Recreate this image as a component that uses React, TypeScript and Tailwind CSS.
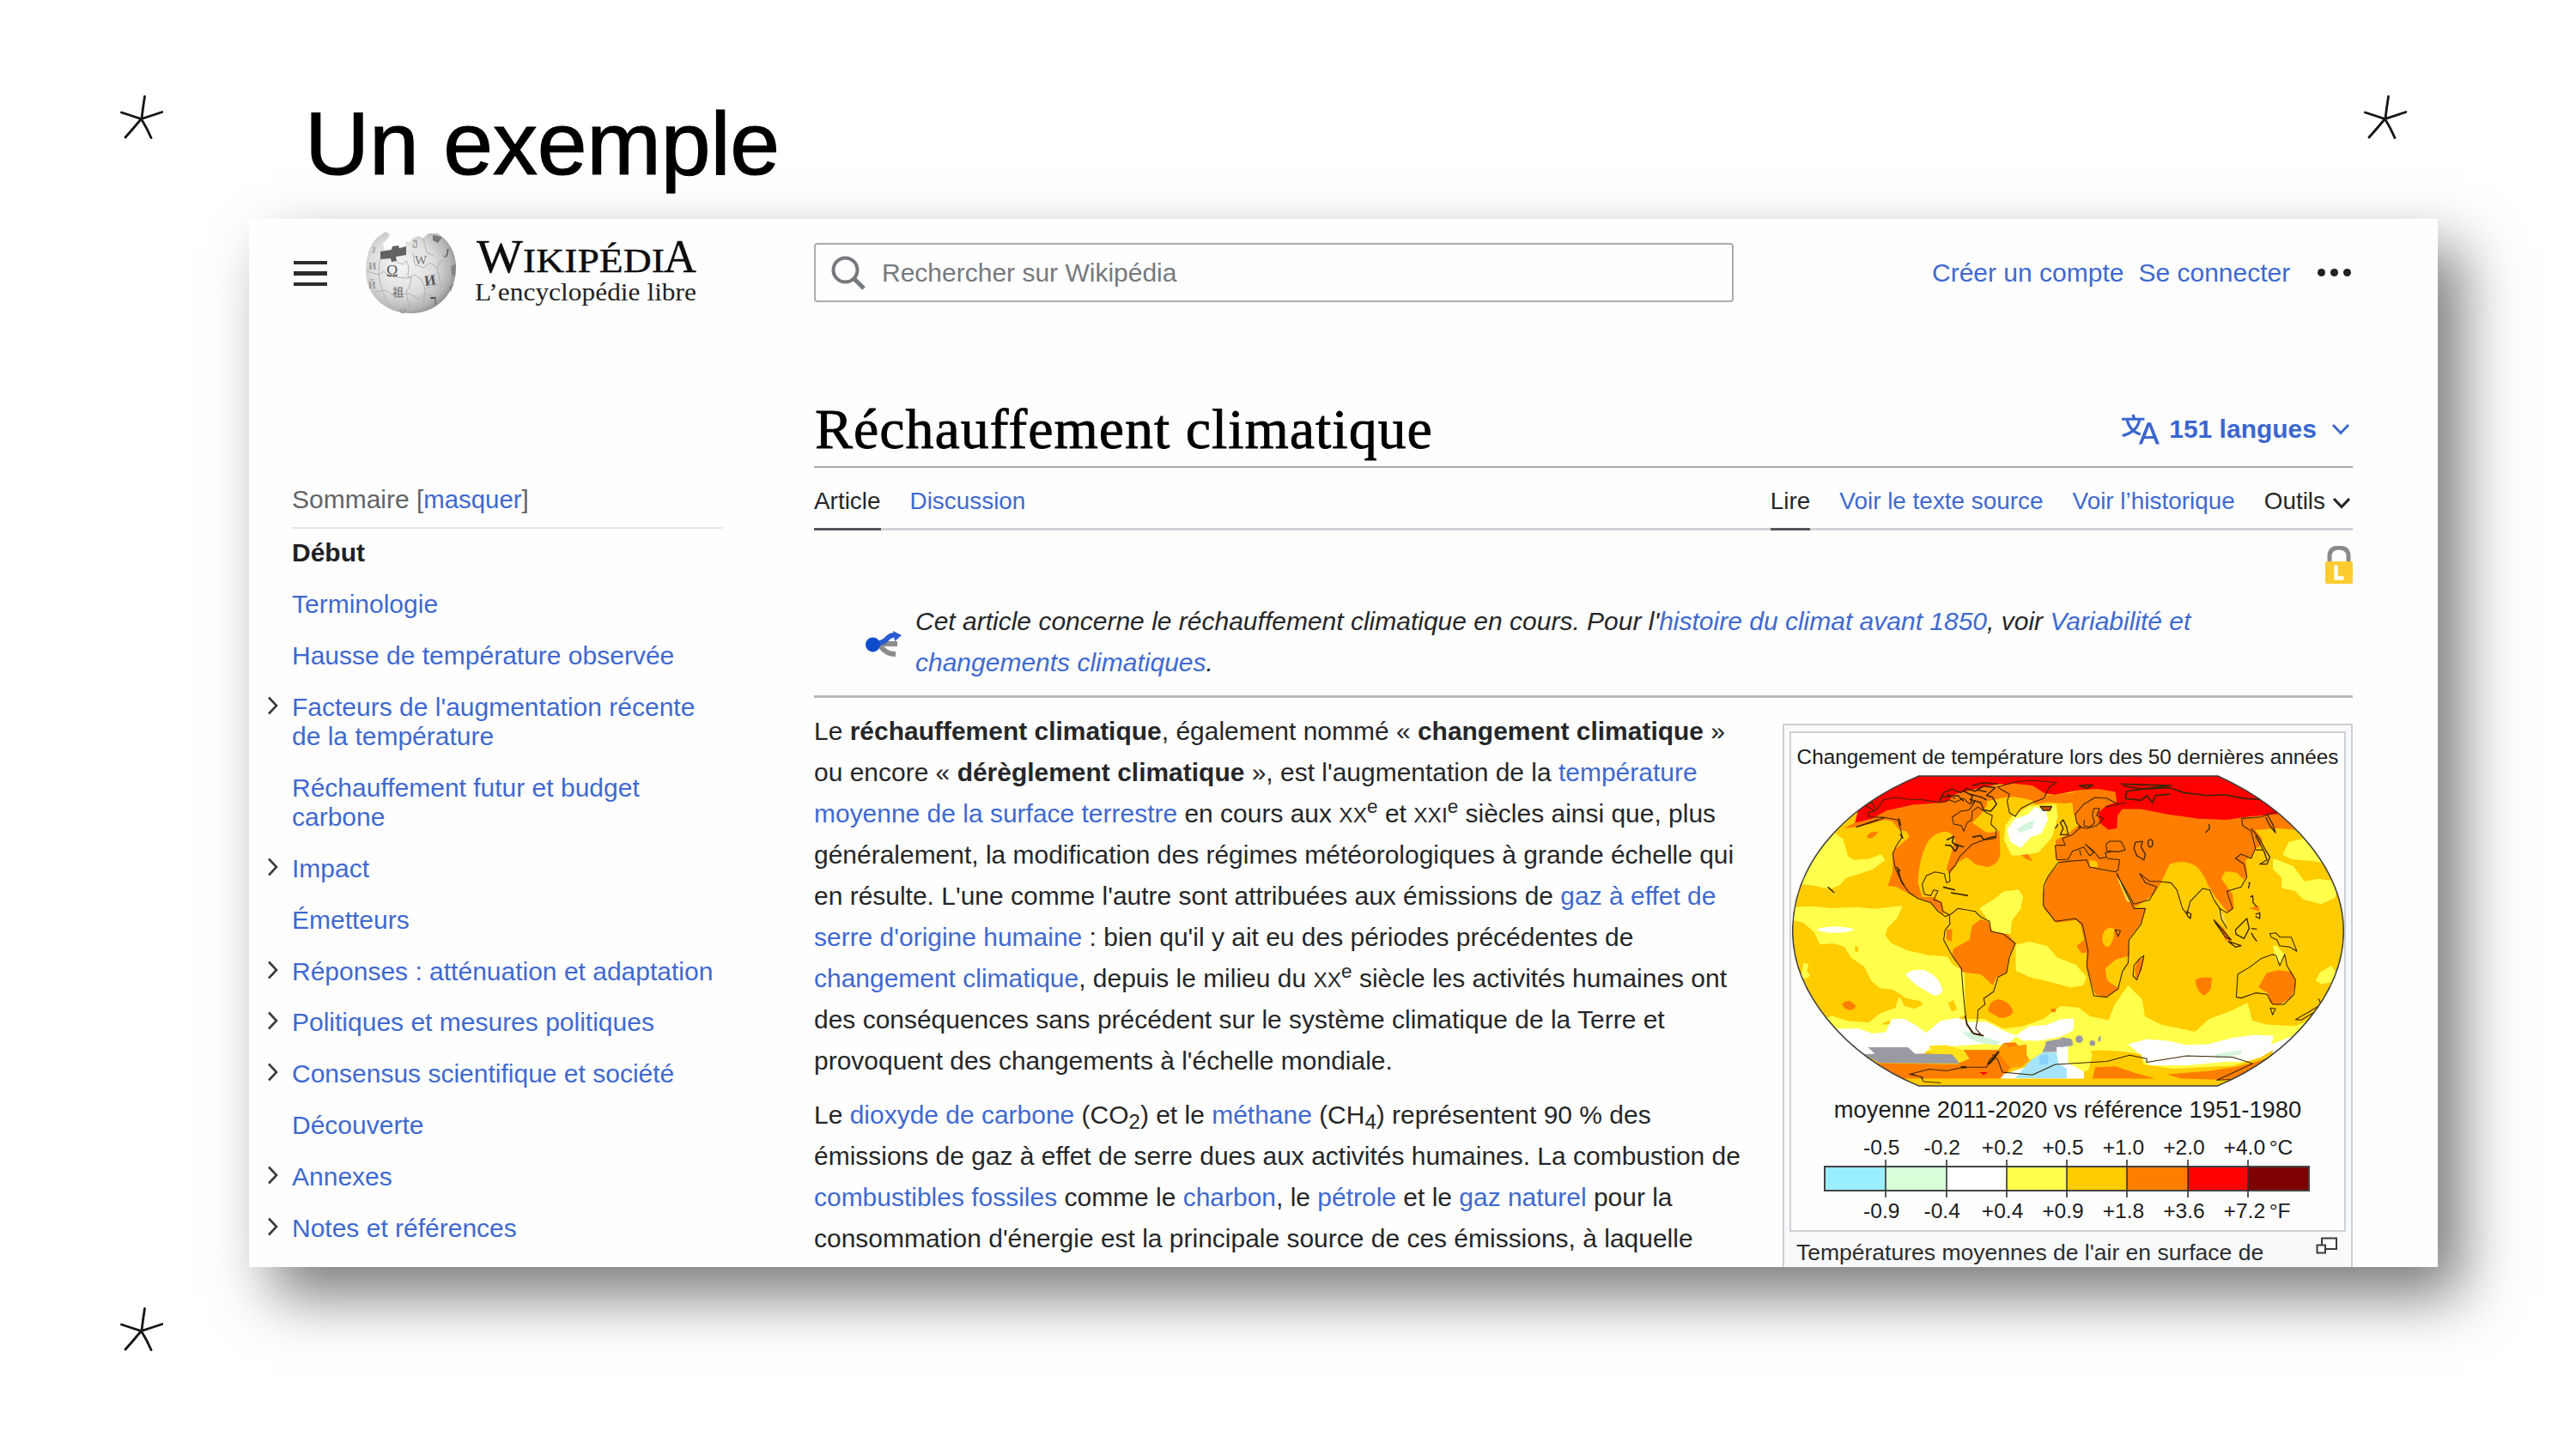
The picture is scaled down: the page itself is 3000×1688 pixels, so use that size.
import React from "react";

const SANS = "font-['Liberation_Sans',Arial,sans-serif]";

function A({ children }: { children: React.ReactNode }) {
  return <a className="text-[#3f69cf]">{children}</a>;
}

function Star({ className }: { className: string }) {
  return (
    <svg viewBox="0 0 50 52" className={"absolute h-[52px] w-[50px] " + className} fill="none" stroke="#151515" strokeWidth="2.8" strokeLinecap="round">
      <path d="M28.5 1.5 Q26.5 14 25 27 M1.5 20 L24.5 27.5 L49 19.5 M24.5 27.5 Q15 39 6 49 M24.5 27.5 Q31 38 36 49.5" />
    </svg>
  );
}

function Globe() {
  return (
    <svg viewBox="0 0 107 96" className="ml-[44px] h-[96px] w-[107px] shrink-0">
      <defs>
        <radialGradient id="ball" cx="0.4" cy="0.42" r="0.64">
          <stop offset="0" stopColor="#f4f4f4" />
          <stop offset="0.55" stopColor="#dedede" />
          <stop offset="0.85" stopColor="#b4b4b4" />
          <stop offset="1" stopColor="#878787" />
        </radialGradient>
      </defs>
      <path d="M14 7 L24 0 L29 3 L26 9 L21 14 L23 21 L33 19 L40 20 L48 17 L47 11 L53 12 L56 7 L62 5 L68 7 L74 2 L84 2 C99 10 107 27 106 44 C105 74 82 95 54 95 C24 95 1 75 1 45 C1 29 6 15 14 7Z" fill="url(#ball)" />
      <path d="M18 23 L31 21 L32 17 L39 16 L40 19 L48 17 L48 27 L36 29 L37 34 L31 35 L30 31 L18 32Z" fill="#616161" />
      <g fill="none" stroke="#b2b2b2" strokeWidth="1">
        <path d="M18 31 Q14 46 18 60 Q22 78 32 90 M36 35 L44 38 L48 34 L51 40 L50 52 L54 54 L52 64 L48 70 L52 92 M56 24 L58 38 L68 42 L76 36 L84 42 L88 34 L102 34 M2 46 L16 50 L22 46 L28 52 L50 54 L58 50 L66 56 L70 66 L84 62 L104 62 M12 70 L24 68 L32 74 L52 72 L62 78 L72 72 L86 78 M68 8 L72 24 L80 28 M70 66 L68 86 M84 42 L88 60" />
      </g>
      <g fill="#555" className="font-['Liberation_Serif',serif]">
        <text x="25" y="52" fontSize="18">Ω</text>
        <text x="58" y="38" fontSize="15" fill="#777">W</text>
        <text x="69" y="62" fontSize="17" fontWeight="700" transform="rotate(-8 76 56)">И</text>
        <text x="32" y="75" fontSize="13" fontWeight="700" className="font-['Noto_Sans_CJK_JP',sans-serif]" fill="#888">祖</text>
        <text x="76" y="85" fontSize="16" fontWeight="700">ר</text>
        <text x="92" y="30" fontSize="15" transform="rotate(12 95 25)">J</text>
        <text x="4" y="44" fontSize="12" fontWeight="700" fill="#999">И</text>
        <text x="4" y="66" fontSize="12" fill="#888">Й</text>
        <text x="40" y="93" fontSize="11" fill="#888">ن</text>
        <text x="8" y="25" fontSize="11" fill="#888">J</text>
        <text x="55" y="16" fontSize="12" fill="#888">უ</text>
      </g>
      <path d="M79 4 L90 6 L85 13 L79 10Z" fill="#777" />
      <path d="M100 40 L106 38 L105 52 L101 50Z M98 64 L103 60 L100 70Z" fill="#858585" />
    </svg>
  );
}

function Wordmark() {
  return (
    <svg viewBox="0 0 262 96" className="ml-[20px] h-[96px] w-[262px] shrink-0 font-['Liberation_Serif',serif]" fill="#0d0d0d">
      <text x="3" y="47" fontSize="55" textLength="54" lengthAdjust="spacingAndGlyphs" stroke="#0d0d0d" strokeWidth="0.4">W</text>
      <text x="57" y="47" fontSize="41" textLength="165" lengthAdjust="spacingAndGlyphs" stroke="#0d0d0d" strokeWidth="0.4">IKIPÉDI</text>
      <text x="221" y="47" fontSize="55" textLength="38" lengthAdjust="spacingAndGlyphs" stroke="#0d0d0d" strokeWidth="0.4">A</text>
      <text x="1" y="80" fontSize="29.5" textLength="258" lengthAdjust="spacingAndGlyphs" fill="#222">L’encyclopédie libre</text>
    </svg>
  );
}

function Chevron({ className }: { className: string }) {
  return (
    <svg viewBox="0 0 22 14" className={"h-[14px] w-[22px] " + className} fill="none" stroke="currentColor">
      <path d="M2 2 L11 11.5 L20 2" />
    </svg>
  );
}

function Header() {
  return (
    <header className="flex h-[69px] items-center text-[30px] leading-[30px]">
      <div className="mt-[2px] ml-[52px] flex w-[39px] shrink-0 flex-col gap-[8px]">
        <span className="h-[4.5px] bg-[#2b2c2e]" />
        <span className="h-[4.5px] bg-[#2b2c2e]" />
        <span className="h-[4.5px] bg-[#2b2c2e]" />
      </div>
      <Globe />
      <Wordmark />
      <div className="ml-[134px] flex h-[69px] w-[1071px] shrink-0 items-center rounded-[4px] border-2 border-[#a9abae] text-[#75797e]">
        <svg viewBox="0 0 40 40" className="ml-[18px] h-[40px] w-[40px]" fill="none" stroke="#75797e" strokeWidth="4">
          <circle cx="16.5" cy="16.5" r="14" />
          <path d="M26.5 26.5 L38 38" strokeWidth="5" />
        </svg>
        <span className="ml-[19px]">Rechercher sur Wikipédia</span>
      </div>
      <nav className="ml-[231px] flex whitespace-nowrap">
        <A>Créer un compte</A>
        <span className="ml-[17px]"><A>Se connecter</A></span>
      </nav>
      <span className="ml-[32px] flex gap-[6px]">
        <i className="h-[9px] w-[9px] rounded-full bg-[#202122]" />
        <i className="h-[9px] w-[9px] rounded-full bg-[#202122]" />
        <i className="h-[9px] w-[9px] rounded-full bg-[#202122]" />
      </span>
    </header>
  );
}

const TOC: { lines: string[]; open?: boolean }[] = [
  { lines: ["Terminologie"] },
  { lines: ["Hausse de température observée"] },
  { lines: ["Facteurs de l'augmentation récente", "de la température"], open: true },
  { lines: ["Réchauffement futur et budget", "carbone"] },
  { lines: ["Impact"], open: true },
  { lines: ["Émetteurs"] },
  { lines: ["Réponses : atténuation et adaptation"], open: true },
  { lines: ["Politiques et mesures politiques"], open: true },
  { lines: ["Consensus scientifique et société"], open: true },
  { lines: ["Découverte"] },
  { lines: ["Annexes"], open: true },
  { lines: ["Notes et références"], open: true },
];

function Sidebar() {
  return (
    <aside className="w-[658px] shrink-0 whitespace-nowrap pl-[21px] pt-[213px] text-[30px] leading-[34.3px]">
      <div className="ml-[29px] w-[502px] border-b-2 border-[#e6e8ec] pb-[15px] text-[#616468]">
        Sommaire <span className="text-[29.4px]">[<A>masquer</A>]</span>
      </div>
      <div className="ml-[29px] mt-[11px] font-bold text-[#202122]">Début</div>
      <ul className="mt-[25.6px] flex flex-col gap-[25.5px]">
        {TOC.map((t) => (
          <li key={t.lines[0]} className="flex">
            <span className="w-[29px] shrink-0">
              {t.open && (
                <svg viewBox="0 0 12 22" className="mt-[4px] h-[22px] w-[13px]" fill="none" stroke="#3a3b3d" strokeWidth="2.6">
                  <path d="M1.5 1.5 L10.5 11 L1.5 20.5" />
                </svg>
              )}
            </span>
            <span>
              {t.lines.map((l) => (
                <div key={l}><A>{l}</A></div>
              ))}
            </span>
          </li>
        ))}
      </ul>
    </aside>
  );
}

const GLOBE_EDGE =
  "M462 27 H1510 C1770 145 1948 360 1948 570 C1948 780 1770 1000 1508 1110 H462 C200 1000 22 780 22 570 C22 350 180 145 462 27Z";

function WorldMap() {
  return (
    <svg viewBox="20 24 1930 1089" className="mt-[7px] h-[363px] w-[643px]">
      <defs>
        <clipPath id="edge"><path d={GLOBE_EDGE} /></clipPath>
      </defs>
      <g clipPath="url(#edge)">
        <rect x="0" y="0" width="1980" height="1140" fill="#ffcc00" />

        {/* mild warming */}
        <g fill="#ffff4c" stroke="#ffff4c" strokeWidth="8" strokeLinejoin="round">
          <path d="M40 400 L130 260 L165 228 L195 250 L212 310 L235 325 L290 320 L330 305 L340 320 L300 350 L245 368 L205 380 L185 405 L150 418 L90 405Z" />
          <path d="M20 490 L90 486 L150 492 L250 490 L310 495 L400 485 L385 520 L350 555 L342 585 L365 615 L420 640 L500 658 L560 662 L580 690 L618 710 L622 860 L570 880 L500 925 L480 915 L410 880 L350 880 L290 915 L200 905 L130 880 L160 870 L220 888 L290 893 L330 860 L385 840 L395 805 L410 835 L450 845 L485 825 L470 810 L420 800 L375 770 L330 765 L300 740 L275 690 L230 660 L205 620 L165 608 L120 612 L100 570 L60 535 L25 528Z" />
          <path d="M60 680 L78 685 L72 710 L84 725 L70 735 L52 730Z" strokeWidth="0" />
          <path d="M680 490 L730 460 L760 435 L810 428 L824 450 L815 490 L785 530 L780 575 L750 582 L715 555 L700 515Z" />
          <path d="M806 620 L850 610 L910 625 L945 665 L1010 690 L1045 730 L1035 755 L995 762 L930 745 L850 725 L806 705Z" />
          <path d="M770 200 L800 160 L850 135 L940 130 L945 170 L925 240 L880 290 L830 300 L790 300 L765 250Z" />
          <path d="M0 880 L150 900 L350 900 L560 880 L690 880 L760 915 L830 905 L900 880 L960 835 L1020 840 L1060 870 L1130 885 L1150 830 L1195 765 L1240 810 L1250 870 L1310 900 L1430 925 L1480 880 L1560 850 L1610 825 L1625 885 L1680 900 L1780 905 L1860 870 L1980 850 L1900 1000 L1700 1030 L1300 1050 L900 1060 L860 1000 L500 985 L0 960Z" />
          <path d="M1740 300 L1760 260 L1830 245 L1900 290 L1900 330 L1840 320 L1770 315Z" />
          <path d="M1705 320 L1770 345 L1810 400 L1860 390 L1930 400 L1915 450 L1870 470 L1810 455 L1780 425 L1735 415 L1735 380 L1705 350Z" />
          <path d="M1855 740 L1870 715 L1905 695 L1930 740 L1870 750Z" />
          <path d="M1700 620 L1715 620 L1740 650 L1732 685 L1712 670Z M515 395 L545 385 L545 415 L520 420Z" strokeWidth="0" />
        </g>

        {/* strong warming over land */}
        <g fill="#ff7e00">
          <path d="M200 210 L300 160 L430 130 L560 110 L590 60 L800 60 L905 95 L1000 85 L1040 65 L1160 80 L1170 130 L1300 130 L1500 170 L1660 150 L1740 150 L1785 215 L1720 210 L1640 215 L1665 250 L1640 300 L1605 320 L1612 370 L1600 390 L1575 365 L1535 360 L1520 385 L1545 420 L1560 440 L1565 490 L1545 505 L1500 450 L1475 410 Q1450 350 1425 338 Q1385 318 1340 335 L1310 400 L1285 440 L1215 490 L1258 490 L1240 540 L1195 600 L1200 655 L1150 670 L1115 700 L1125 745 L1165 770 L1120 800 L1080 790 L1050 700 L1050 640 L1030 550 L1015 530 L945 540 L900 490 L895 440 L915 380 L955 330 L940 310 L942 250 L975 235 L1020 200 L1005 160 L1000 125 L920 118 L870 125 L860 112 L770 100 L700 115 L720 200 L745 220 L748 300 Q740 340 700 345 L660 335 L630 310 L600 330 L570 372 L560 350 L590 250 Q575 215 545 222 Q505 235 490 265 Q462 325 460 400 L475 450 L515 450 L545 470 L550 515 L505 470 L440 445 L385 415 L355 410 L372 360 L372 290 L430 240 L420 220 L395 215 L370 185 L345 180 L290 195 L240 205Z" />
          <path d="M650 550 L680 528 L705 535 L720 570 L775 580 L800 612 L780 655 L770 715 L735 730 L722 758 L680 720 L615 712 L580 650 L585 630 L640 600Z" />
          <path d="M560 565 L580 562 L578 605 L560 598Z" />
          <path d="M282 240 Q290 218 320 222 Q312 240 290 246Z M195 825 Q205 810 225 815 L243 830 Q240 846 220 845 Q200 840 195 825Z M705 850 Q710 808 745 808 Q790 820 792 855 Q775 875 745 872Z M820 303 L845 300 L862 325 L840 318Z M735 165 L748 165 L740 195 L730 190Z" />
          <path d="M1430 740 Q1450 725 1488 733 L1484 770 Q1465 798 1455 792 Q1430 770 1430 740Z" />
          <path d="M1650 765 L1680 715 L1720 706 L1768 712 L1782 755 L1765 800 L1720 830 L1690 820 L1683 785Z" />
          <path d="M1230 670 L1252 660 L1240 710 L1222 740 L1218 700Z M1502 535 L1530 560 L1555 605 L1535 600Z M1618 490 L1650 480 L1655 500Z" />
          <path d="M1015 620 L1040 600 L1055 645 L1030 645Z M925 840 L943 840 L940 853 L927 852Z" />
        </g>

        {/* islands of milder values */}
        <g fill="#ffcc00">
          <path d="M1105 585 Q1115 550 1145 560 Q1150 600 1125 625 Q1100 620 1105 585Z M1195 658 L1160 665 L1115 700 L1120 735 L1140 752 L1165 730 L1195 690Z" />
          <path d="M650 190 L680 160 L700 130 L745 105 L800 100 L770 150 L740 220 L700 225Z" />
          <path d="M950 125 L1000 120 L1002 190 L960 190Z" />
          <path d="M1110 85 L1060 115 L1010 150 L1003 130 L1080 75Z" fill="#ff7e00" />
          <path d="M1630 300 L1645 275 L1672 285 L1668 330 L1640 335Z M1060 320 L1085 325 L1090 345 L1060 345Z" />
          <path d="M565 820 L585 810 L597 845 L578 850Z M240 620 L252 625 L250 645 L240 640Z" />
          <path d="M520 370 L545 368 L560 400 L530 430 L480 440 L475 395Z" />
        </g>
        <path d="M1510 490 L1528 510 L1540 545 L1525 540 L1512 515Z M1155 380 L1180 410 L1208 470 L1190 465Z" fill="#f5d84a" />

        {/* arctic */}
        <path d="M240 190 L255 130 L420 27 L1560 27 L1750 130 L1715 160 L1620 168 L1540 180 L1440 176 L1330 160 L1240 142 L1175 142 L1158 165 L1155 210 L1125 214 L1095 190 L1090 155 L1120 130 L1155 118 L1150 82 L1090 72 L1030 75 L940 92 L870 85 L820 60 L740 55 L660 72 L590 90 L560 118 L440 128 L350 148 L300 175Z" fill="#ff0000" />
        <path d="M735 70 L790 52 L860 60 L915 95 L880 115 L840 110 L810 120 L785 95Z" fill="#ff7e00" />
        <path d="M785 98 L830 105 L860 112 L850 130 L800 165 L775 140Z" fill="#ffcc00" />

        {/* cold spots */}
        <g fill="#fffffe" stroke="#fffffe" strokeWidth="6" strokeLinejoin="round">
          <path d="M775 215 L800 180 L845 165 L870 138 L905 150 L912 180 L890 225 L850 240 L820 275 L785 255Z" />
          <path d="M105 564 Q130 553 180 553 Q225 557 237 564 Q220 575 160 575 Q120 573 105 564Z" strokeWidth="0" />
          <path d="M420 722 Q435 705 480 708 Q530 725 543 775 Q535 795 515 790 Q480 770 455 755Z" />
          <path d="M130 915 L250 912 L300 930 L350 925 L370 880 L410 878 L450 900 L490 928 L540 885 L600 875 L640 890 L700 890 L770 925 L800 935 L770 965 L700 960 L560 970 L500 975 L480 995 L250 1005Z" />
          <path d="M805 935 L850 905 L910 900 L960 880 L1002 878 L1000 915 L960 935 L880 950 L830 950Z" />
          <path d="M1200 965 L1260 950 L1330 955 L1400 970 L1470 968 L1560 945 L1640 935 L1700 938 L1690 970 L1780 935 L1840 930 L1740 1010 L1640 1025 L1550 1022 L1400 1035 L1270 1035 L1240 1000Z" />
        </g>
        <path d="M805 215 L840 190 L868 180 L860 210 L820 225Z M612 920 L650 925 L690 940 L750 955 L735 968 L680 960 L640 945Z M1500 1000 L1590 985 L1590 1000 L1500 1015Z" fill="#d4f5dc" />

        {/* antarctica */}
        <path d="M290 1030 L600 1035 L640 1000 L620 985 L740 985 L760 960 L800 958 L838 1000 L830 1030 L780 1050 L760 1090 L420 1095Z" fill="#ff7e00" />
        <path d="M740 990 L760 960 L780 975 L840 965 L860 1010 L820 1045 L780 1045Z" fill="#ff9d00" />
        <path d="M620 985 L740 985 L740 1045 L620 1040Z" fill="#ff7e00" />
        <path d="M500 970 L560 968 L620 985 L640 1015 L605 1030 L580 1000 L510 998Z" fill="#ffe11a" />
        <path d="M840 950 L900 960 L900 1000 L850 1020 L840 1000Z" fill="#ffff4c" />
        <path d="M415 1085 H1508 L1560 1115 H420Z" fill="#ffcc00" />
        <path d="M945 970 L985 970 L985 1030 L1040 1060 L1040 1085 L748 1085 L760 1070 L850 1040 L900 1020Z" fill="#fffffe" />
        <path d="M850 1025 L900 990 L945 995 L950 1030 L980 1050 L980 1083 L800 1083 L820 1060Z" fill="#a5e4fa" />
        <path d="M885 1005 L915 1000 L915 1035 L885 1035Z" fill="#86d2fb" />
        <path d="M1045 990 L1100 985 L1180 990 L1240 1000 L1250 1035 L1350 1050 L1560 1040 L1660 1010 L1700 985 L1700 1010 L1600 1060 L1500 1085 L1045 1085Z" fill="#ffcc00" />
        <path d="M1045 960 L1070 1000 L1055 1060 L1038 1050 L985 1025 L985 985Z" fill="#ffff4c" />
        <path d="M1080 1045 L1150 1042 L1220 1065 L1290 1085 L1070 1085Z M1330 1070 L1480 1058 L1580 1042 L1630 1030 L1720 1000 L1690 1050 L1560 1090 L1380 1085Z" fill="#ff7e00" />
        <path d="M675 1062 L705 1062 L690 1072Z" fill="#ff0000" />
        <g fill="#9a9aa3">
          <path d="M285 975 L425 975 L450 998 L580 1000 L606 1032 L325 1030 L270 1000 L310 998Z" />
          <path d="M908 955 L960 945 L1000 950 L1000 970 L945 975 L945 992 L895 992 L905 970Z" />
          <path d="M960 940 L995 945 L1003 968 L960 975Z" />
          <circle cx="1024" cy="947" r="13" />
          <circle cx="1070" cy="961" r="10" />
          <path d="M1092 940 L1100 935 L1098 955 L1090 955Z" />
        </g>
        <path d="M892 134 L925 134 L920 145 L900 147Z" fill="#d84a00" />

        {/* coastlines */}
        <g fill="none" stroke="#3b2400" strokeWidth="3.2" strokeLinejoin="round">
          <path d="M245 205 L300 188 L345 172 L290 170 L285 155 L310 148 L265 125 L300 120 L315 145 L340 110 L380 102 L430 108 L480 110 L540 120 L570 110 L590 118 L620 105 L640 125 L660 115 L640 145 L610 150 L580 170 L585 195 L612 200 L620 220 L632 190 L648 180 L650 150 L670 135 L700 155 L720 165 L715 195 L735 215 L730 245 L690 250 L650 265 L625 290 L605 310 L590 340 L570 360 L572 395 L560 400 L552 368 L520 362 L490 375 L475 405 L482 440 L505 445 L515 425 L530 428 L515 460 L540 468 L548 500 L570 512" />
          <path d="M345 172 L390 180 L400 215 L405 240 L385 270 L372 300 L380 345 L395 380 L415 415 L430 435 L460 455 L505 470 L530 500 L555 518 L575 510 L600 490 L660 500 L680 520 L710 535 L715 570 L760 580 L800 612 L780 660 L770 715 L740 730 L725 780 L690 805 L695 825 L670 845 L668 880 L662 910 L680 930 L650 925 L630 895 L625 850 L618 780 L612 700 L580 655 L550 600 L555 565 L572 545 L570 512" />
          <path d="M390 355 L402 395 L412 410 M385 345 L398 360" strokeWidth="5" />
          <path d="M625 865 L632 895 L655 928 L690 935" strokeWidth="5" />
          <path d="M740 65 L800 48 L860 42 L945 50 L920 65 L900 105 L860 120 L820 140 L800 168 L780 155 L772 115 L780 90 L745 70Z" />
          <path d="M560 250 L585 238 L580 258 L600 275 L590 290 L575 270 L555 268 M590 265 L620 275 M650 240 L680 235 L690 250 L720 240 L735 240 M548 415 L590 425 M575 435 L635 445" strokeWidth="5" />
          <path d="M535 115 L550 85 L580 72 L610 85 L630 70 L660 80 L690 62 L730 68 L700 95 L720 100 L735 125 L715 150 L690 145 L680 120 L640 108 M545 100 L600 95 L620 115 M560 90 L590 105 M650 60 L690 50 L740 55 M640 90 L680 100 L700 110 M620 80 L650 95 L645 120 M665 75 L700 82" strokeWidth="4.5" />
          <path d="M888 133 L928 133 L920 147 L898 147Z M145 415 L168 435 M245 205 L320 180 M393 175 L400 200 M398 230 L408 245" strokeWidth="4.5" />
          <path d="M940 210 L950 195 M958 232 L985 232 L980 205 L968 180 L958 190 L968 210 Z" strokeWidth="4" />
          <path d="M945 320 L940 270 L975 268 L965 245 L1000 232 L1030 205 L1015 190 L1010 160 L1040 125 L1080 102 L1120 105 L1160 125 L1190 120 M1020 205 L1050 210 L1085 200 L1110 175 L1085 165 L1095 140 L1075 140 L1070 165 L1078 190 L1060 205 L1040 200 L1042 180 M1115 135 L1165 125" />
          <path d="M945 320 L985 318 L1000 290 L1040 275 L1060 305 L1075 295 L1045 265 L1075 290 L1095 315 L1120 310 L1115 295 L1140 290 M1025 285 L1030 305 M1130 255 L1170 255 L1185 285 L1160 292 L1120 288 L1118 265Z M1120 315 L1165 320 L1160 355 L1150 362 L1085 350 L1060 345 L1050 320 L985 325 L950 330 L915 378 L900 410 L898 480 L940 535 L975 530 L1010 525 L1035 545 L1045 590 L1055 640 L1050 690 L1075 795 L1120 800 L1160 770 L1175 710 L1195 680 L1198 600 L1240 545 L1255 490 L1215 490 L1185 430 L1155 365 M1155 370 L1215 475 L1270 460 L1295 415 L1255 400 L1235 368 L1270 395 L1300 395 L1345 400 L1365 425 L1385 490 L1400 510 L1412 465 L1455 420 L1480 425 L1495 460 L1515 490 L1540 505 L1560 490 L1540 430 L1590 415 L1610 380 L1600 335 L1570 315 L1590 300 L1625 315 L1640 280 L1625 220 L1595 200 L1592 175 L1660 170 L1700 155 L1765 152 M1515 490 L1520 525 L1540 560" />
          <path d="M1220 258 L1245 255 L1240 275 L1255 300 L1250 320 L1225 305 L1215 280Z M1265 262 A8 10 0 1 0 1280 262 A8 10 0 1 0 1265 262 M1477 195 L1480 210 L1465 225" strokeWidth="4" />
          <path d="M1400 500 L1415 510 L1412 525 L1402 515Z M1495 530 L1555 600 L1535 590 L1500 540Z M1545 605 L1590 620 L1570 625Z M1570 565 L1610 525 L1618 560 L1600 595 L1572 580Z M1625 560 L1645 562 M1625 575 L1640 600 M1630 585 L1645 605 M1622 450 L1630 445 L1632 470 L1645 485 M1640 510 L1655 505 L1655 525 L1640 518 M1615 400 L1620 400 L1615 420" strokeWidth="4" />
          <path d="M1690 578 L1710 575 L1725 590 L1765 590 L1785 640 L1760 625 L1725 620 L1715 600 L1695 590Z" />
          <path d="M1573 800 L1578 720 L1620 695 L1660 665 L1700 650 L1712 655 L1725 690 L1742 650 L1750 690 L1780 740 L1775 790 L1740 825 L1700 825 L1680 790 L1640 785 L1590 803Z M1692 838 L1710 840 L1700 862Z M1780 878 L1830 850 L1870 825 L1860 805 M1780 878 L1800 880 L1850 850 L1880 820" />
          <path d="M1250 655 L1240 700 L1225 740 L1212 725 L1215 690 L1235 665Z M1150 565 L1168 568 L1160 588Z" />
          <path d="M1625 210 L1650 240 L1675 285 L1690 310 L1680 335 L1655 335 L1680 320 L1670 290 L1640 235 M1640 285 L1665 285 M1675 170 L1690 200 L1710 225 L1700 195 L1680 160" strokeWidth="4" />
          <path d="M1025 60 L1070 58 L1050 70Z M1170 55 L1345 60 L1240 72 L1180 62 M1340 68 L1250 72 L1190 80 L1185 105 L1240 112 L1260 95 L1280 120 L1290 95 L1340 90 M1340 68 L1390 85 L1470 95 L1530 92 L1600 105 L1670 110" strokeWidth="5" />
          <path d="M430 1070 L500 1052 L560 1058 L620 1045 L700 1045 L710 1020 L745 990 M720 1000 L740 1020 L755 1062 L860 1072 L940 1035 L1120 1025 L1200 1003 L1260 1015 L1260 1028 L1400 1005 L1560 1010 L1630 1032 L1550 1070 L1505 1090 L1560 1088 L1640 1050 M430 1070 L470 1078 L480 1095 L540 1100 M440 1070 L480 1082" />
          <path d="M610 1045 L630 1045 M712 1030 L742 990 M705 1035 L730 1010" strokeWidth="8" />
        </g>
      </g>
      <path d={GLOBE_EDGE} fill="none" stroke="#3c3c3c" strokeWidth="4.5" />
    </svg>
  );
}

const SCALE = ["bg-[#99eeff]", "bg-[#d9ffd9]", "bg-white", "bg-[#ffff4c]", "bg-[#ffcc00]", "bg-[#ff7e00]", "bg-[#ff0000]", "bg-[#7e0000]"];

function Labels({ values, unit, className }: { values: string[]; unit: string; className: string }) {
  return (
    <div className={"flex pl-[70px] text-[24.6px] leading-[28px] text-[#1c1c1c] " + className}>
      {values.map((v, i) => (
        <span key={v} className="relative w-[70.45px] text-center">
          {v}
          {i === values.length - 1 && <span className="absolute left-[64px]">{unit}</span>}
        </span>
      ))}
    </div>
  );
}

function Thumb() {
  return (
    <figure className="mt-[15px] ml-[1128px] flex h-[700px] w-[664px] flex-col items-center whitespace-nowrap border-2 border-[#cdd0d5] bg-[#f8f9fa] pt-[7px]">
      <div className="flex h-[583px] w-[648px] shrink-0 flex-col items-center border-2 border-[#cdd0d5] bg-[#fefefe] text-[#1c1c1c]">
        <div className="mt-[14px] text-[24.3px] leading-[28px]">Changement de température lors des 50 dernières années</div>
        <WorldMap />
        <div className="mt-[11px] text-[27.3px] leading-[32px]">moyenne 2011-2020 vs référence 1951-1980</div>
        <div className="mt-[14px] w-[644px]">
          <Labels values={["-0.5", "-0.2", "+0.2", "+0.5", "+1.0", "+2.0", "+4.0"]} unit="°C" className="" />
          <div className="relative mt-[7px] ml-[38px] flex h-[30px] w-[566px] border-2 border-[#444]">
            {SCALE.map((c, i) => (
              <div key={c} className={"relative flex-1 " + c}>
                {i > 0 && <span className="absolute -top-[9px] -left-px h-[44px] w-[2px] bg-[#333]/80" />}
              </div>
            ))}
          </div>
          <Labels values={["-0.9", "-0.4", "+0.4", "+0.9", "+1.8", "+3.6", "+7.2"]} unit="°F" className="mt-[9px]" />
        </div>
      </div>
      <figcaption className="mt-[6px] flex w-full pl-[14px] text-[26.5px] leading-[36px] text-[#2b2c2e]">
        Températures moyennes de l'air en surface de
        <svg viewBox="0 0 26 20" className="absolute ml-[605px] h-[20px] w-[26px]" fill="#fefefe" stroke="#3a3b3d" strokeWidth="2">
          <path d="M7 1.5 H24 V14 H7Z" />
          <path d="M1.5 9.5 H11 V18.5 H1.5Z" />
        </svg>
      </figcaption>
    </figure>
  );
}

function E() {
  return <span className="relative -top-[11px] text-[22.5px] leading-none">e</span>;
}
function C({ children }: { children: string }) {
  return <span className="text-[24.5px] leading-none">{children}</span>;
}
function Sub({ children }: { children: string }) {
  return <span className="relative top-[6px] text-[24px] leading-none">{children}</span>;
}

function Article() {
  return (
    <main className="w-[1792px] shrink-0 text-[#252628]">
      <div className="flex h-[193px] items-end justify-between border-b-2 border-[#a5a8ac]">
        <h1 className="mb-[10px] ml-[1px] whitespace-nowrap font-['Liberation_Serif',serif] text-[66px] leading-[66px] tracking-[0.95px] text-black [-webkit-text-stroke:0.8px_black]">
          Réchauffement climatique
        </h1>
        <div className="mb-[28px] flex items-center whitespace-nowrap text-[30px] font-bold leading-[30px] text-[#3a66cf]">
          <svg viewBox="0 0 20 20" className="mr-[11px] h-[44px] w-[44px] -my-[8px]" fill="#3a66cf">
            <path d="M20 18h-1.44a.6.6 0 0 1-.4-.12.8.8 0 0 1-.23-.31L17 15h-5l-1 2.54a.8.8 0 0 1-.22.3.6.6 0 0 1-.4.14H9l4.55-11.47h1.89zm-3.53-4.31L14.89 9.5a12 12 0 0 1-.39-1.24q-.09.37-.19.69l-.19.56-1.58 4.19zm-6.3-1.58a13.4 13.4 0 0 1-2.91-1.41 11.46 11.46 0 0 0 2.81-5.37H12V4H7.31a4 4 0 0 0-.2-.56C6.87 2.79 6.6 2 6.6 2l-1.47.5s.4.89.6 1.5H0v1.33h2.15A11.23 11.23 0 0 0 5 10.7a17.2 17.2 0 0 1-5 2.1q.56.82.87 1.38a23.3 23.3 0 0 0 5.22-2.51 15.6 15.6 0 0 0 3.56 1.77zM3.63 5.33h4.91a8.1 8.1 0 0 1-2.45 4.45 9.1 9.1 0 0 1-2.46-4.45" />
          </svg>
          151 langues
          <Chevron className="mx-[3px] ml-[17px] [stroke-width:2.8]" />
        </div>
      </div>
      <nav className="flex h-[73px] whitespace-nowrap border-b-[3px] border-[#cfd2d6] pt-[25px] text-[27.9px] leading-[28px] [&>*]:h-[48px]">
        <span className="border-b-[3px] border-[#54575b]">Article</span>
        <span className="ml-[34px]"><A>Discussion</A></span>
        <span className="ml-auto border-b-[3px] border-[#54575b]">Lire</span>
        <span className="ml-[34px]"><A>Voir le texte source</A></span>
        <span className="ml-[34px]"><A>Voir l’historique</A></span>
        <span className="ml-[34px] flex">
          Outils
          <Chevron className="mt-[9px] mr-[2px] ml-[8px] [stroke-width:3.2]" />
        </span>
      </nav>
      <div className="flex h-[82px] justify-end pt-[18px]">
        <svg viewBox="0 0 32 44" className="h-[44px] w-[32px]">
          <path d="M5 20 V12 Q5 2 16 2 Q27 2 27 12 V20" fill="none" stroke="#8a8a8a" strokeWidth="5" />
          <rect x="0" y="18" width="32" height="26" rx="2" fill="#fccb2f" />
          <path d="M12.5 22.5 V37.5 H21.5" fill="none" stroke="#fff" strokeWidth="4.5" />
        </svg>
      </div>
      <div className="flex h-[113px] whitespace-nowrap border-b-[3px] border-[#b9b9b9] text-[30px] italic leading-[48px]">
        <svg viewBox="0 0 42 30" className="mt-[35px] mr-[16px] ml-[60px] h-[30px] w-[42px]">
          <path d="M14 15 H37 M16 15 Q22 27 35 27" fill="none" stroke="#8c8c8c" strokeWidth="6" />
          <path d="M12 15 Q22 14 26 8 Q29 5 33 5" fill="none" stroke="#2a5bd0" strokeWidth="6" />
          <path d="M32 0 L42 5 L34 12Z" fill="#2a5bd0" />
          <circle cx="8.5" cy="16" r="8.5" fill="#0f4cc9" />
        </svg>
        <p>
          Cet article concerne le réchauffement climatique en cours. Pour l'<A>histoire du climat avant 1850</A>, voir <A>Variabilité et</A>
          <br />
          <A>changements climatiques</A>.
        </p>
      </div>
      <div className="grid">
        <div className="col-start-1 row-start-1 mt-[15px] whitespace-nowrap text-[29.98px] leading-[48px]">
          <p>
            Le <b>réchauffement climatique</b>, également nommé « <b>changement climatique</b> »<br />
            ou encore « <b>dérèglement climatique</b> », est l'augmentation de la <A>température</A><br />
            <A>moyenne de la surface terrestre</A> en cours aux <C>XX</C><E /> et <C>XXI</C><E /> siècles ainsi que, plus<br />
            généralement, la modification des régimes météorologiques à grande échelle qui<br />
            en résulte. L'une comme l'autre sont attribuées aux émissions de <A>gaz à effet de</A><br />
            <A>serre d'origine humaine</A> : bien qu'il y ait eu des périodes précédentes de<br />
            <A>changement climatique</A>, depuis le milieu du <C>XX</C><E /> siècle les activités humaines ont<br />
            des conséquences sans précédent sur le système climatique de la Terre et<br />
            provoquent des changements à l'échelle mondiale.
          </p>
          <p className="mt-[15px]">
            Le <A>dioxyde de carbone</A> (CO<Sub>2</Sub>) et le <A>méthane</A> (CH<Sub>4</Sub>) représentent 90 % des<br />
            émissions de gaz à effet de serre dues aux activités humaines. La combustion de<br />
            <A>combustibles fossiles</A> comme le <A>charbon</A>, le <A>pétrole</A> et le <A>gaz naturel</A> pour la<br />
            consommation d'énergie est la principale source de ces émissions, à laquelle
          </p>
        </div>
        <div className="col-start-1 row-start-1 mt-[15px]">
          <Thumb />
        </div>
      </div>
    </main>
  );
}

export default function App() {
  return (
    <div className={"relative h-[1688px] w-[3000px] overflow-hidden bg-white " + SANS}>
      <Star className="left-[140px] top-[111px]" />
      <Star className="left-[2753px] top-[111px]" />
      <Star className="left-[140px] top-[1523px]" />
      <h1 className="h-[255px] pt-[109px] pl-[355px] text-[104px] leading-[116px] tracking-[-0.2px] text-black [-webkit-text-stroke:1.2px_black]">Un exemple</h1>
      <section className="relative ml-[290px] h-[1221px] w-[2549px] overflow-hidden bg-[#fefefe] pt-[28px] shadow-[28px_34px_66px_rgba(0,0,0,0.52)]">
        <Header />
        <div className="flex">
          <Sidebar />
          <Article />
        </div>
      </section>
    </div>
  );
}
